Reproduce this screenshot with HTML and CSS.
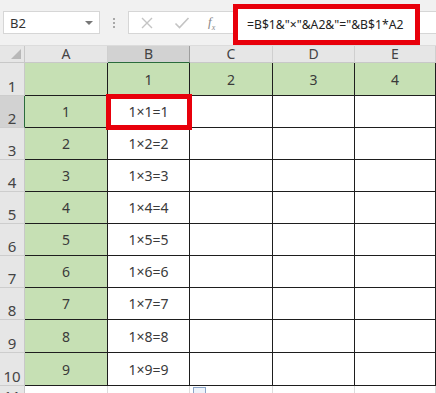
FILE: index.html
```html
<!DOCTYPE html>
<html lang="zh">
<head>
    <meta charset="UTF-8" />
    <title>Sheet</title>
    <link rel="stylesheet" href="styles.css">
</head>
<body>
    <div class="toolbar">
        <div class="name-box">
            <span>B2</span>
            <span class="drop"></span>
        </div>
        <div class="dots"><i></i><i></i><i></i></div>
        <div class="formula-bar">
            <svg class="icon" width="14" height="14" viewBox="0 0 14 14"><path d="M2 2 L12 12 M12 2 L2 12" stroke="#c4c4c4" stroke-width="1.4" fill="none"/></svg>
            <svg class="icon" width="16" height="14" viewBox="0 0 16 14"><path d="M1.5 7.5 L5.5 11.5 L14.5 2" stroke="#c4c4c4" stroke-width="1.6" fill="none"/></svg>
            <span class="fx">f<sub>x</sub></span>
            <div class="formula">=B$1&amp;"×"&amp;A2&amp;"="&amp;B$1*A2</div>
        </div>
    </div>

    <div class="sheet">
        <div class="corner"><span></span></div>
        <div class="col-head">A</div>
        <div class="col-head active">B</div>
        <div class="col-head">C</div>
        <div class="col-head">D</div>
        <div class="col-head">E</div>

        <div class="row-head tall">1</div>
        <div class="cell green"></div>
        <div class="cell green">1</div>
        <div class="cell green">2</div>
        <div class="cell green">3</div>
        <div class="cell green">4</div>
    </div>

    <script>
        // rows 2..11 of the table
        const sheet = document.querySelector(".sheet");
        for (let n = 1; n <= 10; n++) {
            let row = n + 1;
            let head = document.createElement("div");
            head.className = "row-head" + (row == 2 ? " active" : "") + (row == 11 ? " last" : "");
            head.textContent = row;
            sheet.appendChild(head);

            let a = document.createElement("div");
            a.className = "cell" + (row < 11 ? " green" : " blank");
            a.textContent = row < 11 ? n : "";
            sheet.appendChild(a);

            let b = document.createElement("div");
            b.className = "cell" + (row == 2 ? " picked" : "") + (row == 11 ? " blank" : "");
            b.textContent = row < 11 ? "1×" + n + "=" + n : "";
            if (row == 11) {
                b.innerHTML = '<span class="paste"></span>';
            }
            sheet.appendChild(b);

            for (let c = 0; c < 3; c++) {
                let e = document.createElement("div");
                e.className = "cell" + (row == 11 ? " blank" : "");
                sheet.appendChild(e);
            }
        }
    </script>
</body>
</html>
```

FILE: styles.css
```css
body {
    margin: 0;
    width: 436px;
    height: 393px;
    overflow: hidden;
    background: #ffffff;
    font-family: "Noto Sans", "Noto Sans CJK SC", sans-serif;
    color: #333333;
}

.toolbar {
    height: 46px;
    background: #f1f1f1;
    display: flex;
    align-items: center;
    padding-left: 3px;
    box-sizing: border-box;
    border-bottom: 1px solid #dcdcdc;
}

.name-box {
    width: 97px;
    height: 23px;
    background: #ffffff;
    border: 1px solid #d6d6d6;
    box-sizing: border-box;
    display: flex;
    align-items: center;
    justify-content: space-between;
    padding: 0 6px 0 6px;
    font-size: 13px;
    color: #333;
}

.drop {
    width: 0;
    height: 0;
    border-left: 4px solid transparent;
    border-right: 4px solid transparent;
    border-top: 4px solid #777;
}

.dots {
    width: 28px;
    display: flex;
    flex-direction: column;
    align-items: center;
    gap: 2px;
}

.dots i {
    width: 2px;
    height: 2px;
    background: #a8a8a8;
}

.formula-bar {
    flex: 1;
    height: 23px;
    background: #ffffff;
    border: 1px solid #d6d6d6;
    border-right: 0;
    box-sizing: border-box;
    display: flex;
    align-items: center;
    padding-left: 11px;
    gap: 20px;
    position: relative;
}

.fx {
    font-family: "Liberation Serif", serif;
    font-style: italic;
    font-size: 13px;
    color: #888;
    margin-left: -2px;
}

.fx sub {
    font-size: 8px;
}

.formula {
    position: absolute;
    left: 104px;
    top: -8px;
    width: 187px;
    height: 41px;
    border: 5px solid #e8000b;
    box-sizing: border-box;
    background: #ffffff;
    font-size: 12.2px;
    color: #222;
    display: flex;
    align-items: center;
    padding-left: 9px;
    white-space: nowrap;
}

.sheet {
    display: grid;
    grid-template-columns: 25px 83px 82px 83px 82px 81px;
    grid-template-rows: 17px 33px repeat(7, 32px) 33px 33px 20px;
    font-size: 14px;
}

.corner {
    background: #e6e6e6;
    border-right: 1px solid #c8c8c8;
    border-bottom: 1px solid #c8c8c8;
    box-sizing: border-box;
    position: relative;
}

.corner span {
    position: absolute;
    right: 3px;
    bottom: 3px;
    width: 0;
    height: 0;
    border-left: 10px solid transparent;
    border-bottom: 10px solid #b8b8b8;
}

.col-head {
    background: #e6e6e6;
    border-right: 1px solid #cfcfcf;
    border-bottom: 1px solid #c8c8c8;
    box-sizing: border-box;
    text-align: center;
    line-height: 16px;
    color: #444;
}

.col-head.active {
    background: #d2d2d2;
    border-right-color: #9e9e9e;
    border-bottom: 1px solid #2a6b3c;
}

.row-head {
    background: #e6e6e6;
    border-right: 1px solid #c8c8c8;
    border-bottom: 1px solid #cdcdcd;
    box-sizing: border-box;
    display: flex;
    align-items: flex-end;
    justify-content: center;
    line-height: 18px;
    font-size: 15px;
    color: #444;
}

.row-head.active {
    background: #d2d2d2;
    border-right: 1px solid #2a6b3c;
}

.cell {
    border-right: 1px solid #1e1e1e;
    border-bottom: 1px solid #1e1e1e;
    box-sizing: border-box;
    display: flex;
    align-items: center;
    justify-content: center;
    color: #3a3a3a;
    position: relative;
}

.cell.green {
    background: #c6e0b4;
}

.cell.blank {
    border-right: 1px solid #dcdcdc;
    border-bottom: 0;
}

.cell.picked {
    outline: 5px solid #e8000b;
    outline-offset: -3px;
    z-index: 1;
}

.paste {
    position: absolute;
    right: -17px;
    top: 1px;
    width: 13px;
    height: 12px;
    border: 1px solid #8aa4c8;
    background: #eef3fa;
    box-sizing: border-box;
    z-index: 1;
}
```
